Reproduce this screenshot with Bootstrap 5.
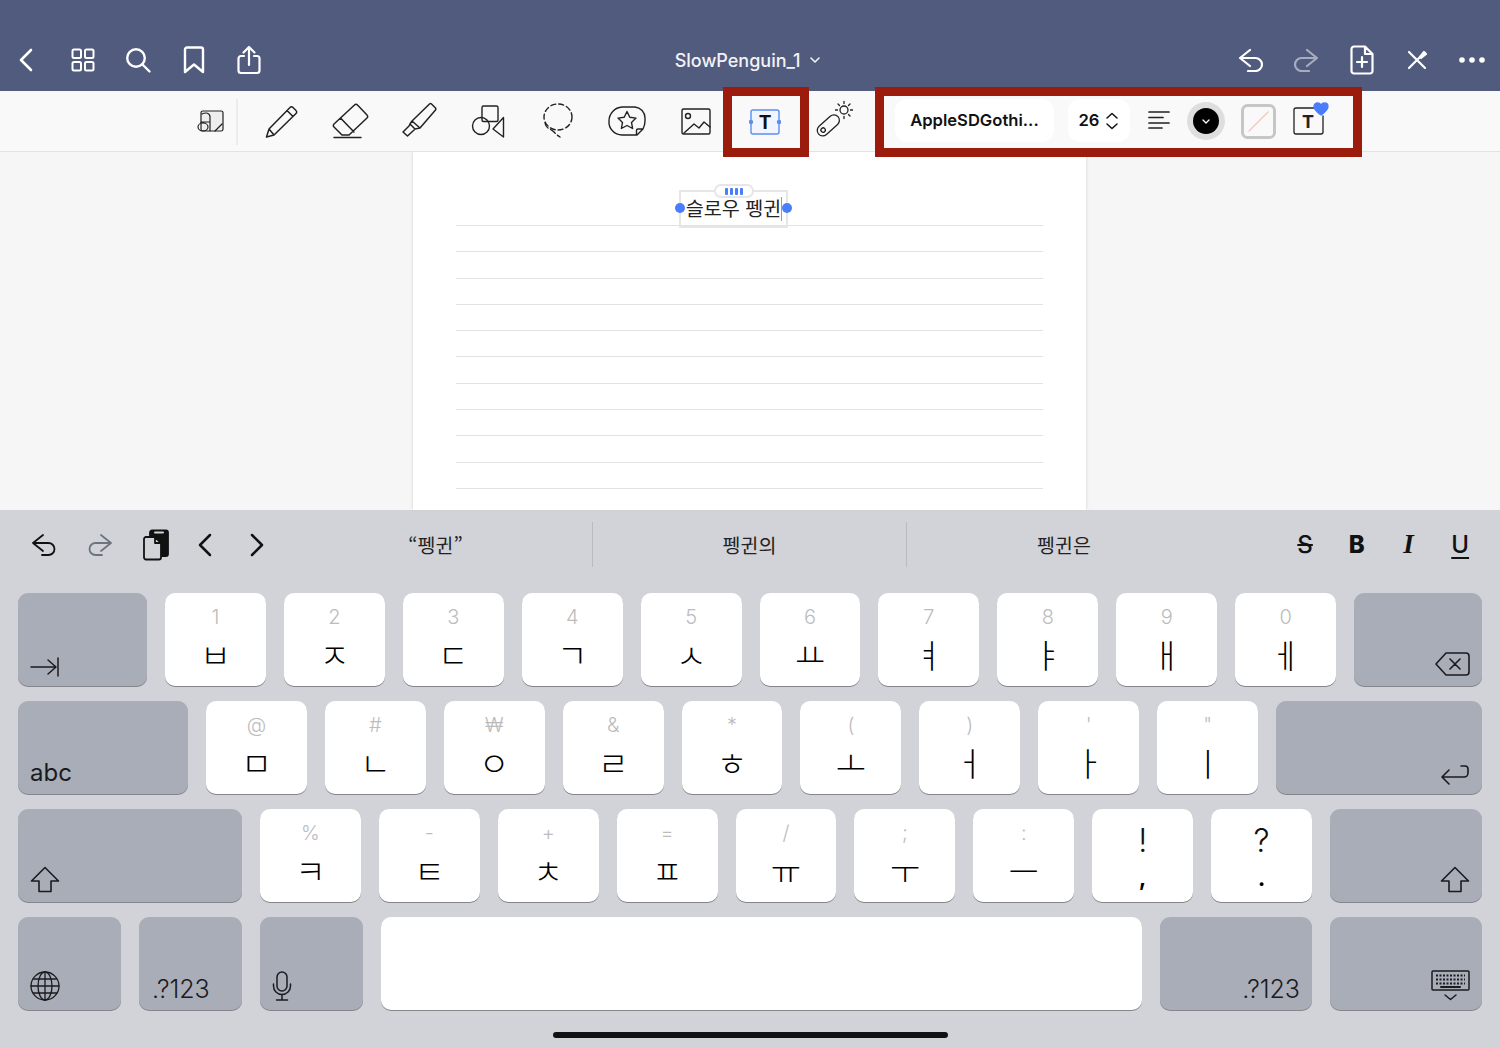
<!DOCTYPE html>
<html lang="ko">
<head>
<meta charset="utf-8">
<title>SlowPenguin_1</title>
<link href="https://cdn.jsdelivr.net/npm/bootstrap@5.3.0/dist/css/bootstrap.min.css" rel="stylesheet">
<style>
html,body{margin:0;background:#d1d3d9}
body{font-family:Inter,"Noto Sans CJK KR",sans-serif}
.screen{width:1500px;height:1048px;overflow:hidden}
svg{display:block;fill:none;stroke:currentColor;stroke-linecap:round;stroke-linejoin:round}
.topbar{height:91px;background:#515b7d;color:#fff;padding-top:29px}
.topside{flex:1 1 0}
.topcell{width:55.3px;height:60px}
.back-ic{margin-right:3px}
.doc-title{font-size:18px;font-weight:500;color:#f1f2f6;margin-right:5px;gap:10px;white-space:nowrap}
.toolbar{height:61px;background:#f9f9f9;border-bottom:1px solid #e3e3e3;padding-left:184px;color:#222;position:relative;z-index:2}
.firstcell{width:54px;height:46px;margin-top:1px;margin-right:8.4px;border-right:2px solid #ececec;padding-left:11px}
.toolcell{width:69.15px;height:60px}
.red-frame{border:9px solid #9b1c0c;height:70px;margin-top:2px;flex:none;background:#f9f9f9}
.frame-text{width:86px;margin-left:-7.5px;margin-right:-9.35px}
.frame-style{width:487px;margin-left:6.25px;padding-left:11px}
.pill{height:43px;background:#fff;border-radius:12px;font-size:16.6px;font-weight:600;color:#111;margin-top:-3px}
.pill-font{width:159px}
.pill-size{width:62px;margin-left:14px;gap:6px}
.tint{width:38px;height:38px;border-radius:50%;background:#dedede;margin-left:17px;margin-top:-2px}
.tint-in{width:26px;height:26px;border-radius:50%;background:#000;color:#fff}
.swatch{margin-left:16px;margin-top:-2px}
.align-ic{margin-left:18px;margin-top:-4px}
.txt-ic{margin-left:17px;margin-top:-6px}
.t-ic{margin-right:1px}
.canvas{height:358px;background:#f6f6f6}
.sheet{width:673px;margin-left:413px;height:358px;background:#fff;box-shadow:0 0 3px #cfcfcf;position:relative;padding:73px 43px 0}
.ruled{height:265px;background:repeating-linear-gradient(to bottom,#e2e2e2 0,#e2e2e2 1px,transparent 1px,transparent 26.3px)}
.tbox{position:absolute;left:266px;top:38px;width:109px;height:38px;border:2px solid #e6e6e6;font-size:19.6px;line-height:32px;color:#222;text-align:center;white-space:nowrap;font-family:"Noto Sans CJK KR",sans-serif}
.tbox-grip{position:absolute;left:33px;top:-8px;width:40px;height:14px;background:#fff;border:2px solid #e6e6e6;border-radius:8px;gap:2px}
.tbox-grip i{display:block;width:3px;height:7px;border-radius:1px;background:#4a7dfb}
.tbox-dot{position:absolute;top:11px;width:10px;height:10px;border-radius:50%;background:#4a7dfb}
.tbox-dot.l{left:-6px}.tbox-dot.r{right:-6px}
.tbox-caret{position:absolute;right:4px;top:5px;width:1px;height:24px;background:#7d9cf0}
.kb{height:538px;background:#d1d3d9;color:#111}
.sugbar{height:83px;padding-left:16px;padding-bottom:14px}
.sugtools{width:263px;flex:none}
.sugcell{width:56px;height:69px}
.chev1{width:32px;margin-left:5px}
.chev2{width:32px;margin-left:20px}
.sugword{width:314px;height:45px;font-size:19.5px;color:#222;border-right:1px solid #b9bbc2;font-family:"Noto Sans CJK KR",sans-serif}
.sugword.last{border-right:0}
.fmt-group{padding-right:14px}
.fmt{width:51.7px;font-size:24px;color:#111;text-align:center;line-height:1}
.fmt-s{font-weight:500;text-decoration:line-through;text-decoration-thickness:2px}
.fmt-b{font-weight:800}
.fmt-i{font-family:"Liberation Serif",serif;font-style:italic;font-weight:700;font-size:27px}
.fmt-u{font-weight:500;text-decoration:underline;text-underline-offset:4px;text-decoration-thickness:2px}
.kbrows{padding:0 18px;gap:15px}
.kbrow{height:93px;gap:18px}
.kkey{flex:1 1 0;min-width:0;background:#fff;border-radius:10px;box-shadow:0 1px 0 #85858b;padding-top:10px}
.kkey-up{font-size:20px;line-height:28px;height:28px;color:#bcbcbc;font-weight:300}
.kkey-main{font-size:33px;line-height:46px;height:46px;color:#000;font-weight:300;font-family:"Noto Sans CJK KR",sans-serif}
.kkey.punct{padding-top:18px}
.punct .kkey-up{font-size:32px;color:#111;font-weight:300}
.punct .kkey-main{font-family:Inter,sans-serif;margin-top:0;font-weight:600;font-size:24px}
.fnkey{flex:none;background:#a9adb8;border-radius:10px;box-shadow:0 1px 0 #85858b;padding:0 12px 9px;font-size:24px;line-height:24px;color:#1b1b1f}
.numkey{font-size:25px;font-weight:300;padding-left:13px}
.w129{width:129px}.w128{width:128px}.w170{width:170px}.w206{width:206px}.w224{width:224px}.w152{width:152px}.w103{width:103px}
.spacekey{flex:1 1 0;background:#fff;border-radius:10px;box-shadow:0 1px 0 #85858b}
.homebar{width:395px;height:6px;border-radius:3px;background:#111;margin:22px auto 0}
</style>
</head>
<body>
<div class="screen">

<header class="topbar d-flex align-items-center">
  <div class="topside d-flex">
    <div class="topcell d-flex align-items-center justify-content-center"><svg class="back-ic" width="16" height="24" viewBox="0 0 16 24" stroke-width="2.6"><path d="M13 2 3 12l10 10"/></svg></div>
    <div class="topcell d-flex align-items-center justify-content-center"><svg width="24" height="24" viewBox="0 0 24 24" stroke-width="2"><rect x="1.5" y="1.5" width="8.5" height="8.5" rx="1.5"/><rect x="14" y="1.5" width="8.5" height="8.5" rx="1.5"/><rect x="1.5" y="14" width="8.5" height="8.5" rx="1.5"/><rect x="14" y="14" width="8.5" height="8.5" rx="1.5"/></svg></div>
    <div class="topcell d-flex align-items-center justify-content-center"><svg width="26" height="26" viewBox="0 0 26 26" stroke-width="2.4"><circle cx="11" cy="11" r="8.8"/><path d="m17.5 17.5 7 7"/></svg></div>
    <div class="topcell d-flex align-items-center justify-content-center"><svg width="22" height="28" viewBox="0 0 22 28" stroke-width="2.4"><path d="M2 3.5A2 2 0 0 1 4 1.500h14a2 2 0 0 1 2 2V26l-9-7.500L2 26z"/></svg></div>
    <div class="topcell d-flex align-items-center justify-content-center"><svg width="24" height="30" viewBox="0 0 24 30" stroke-width="2.2"><path d="M7 11H4a2.500 2.500 0 0 0-2.500 2.500v12A2.500 2.500 0 0 0 4 28h16a2.500 2.500 0 0 0 2.500-2.500v-12A2.500 2.500 0 0 0 20 11h-3M12 20V2M6.500 7.500 12 2l5.500 5.500"/></svg></div>
  </div>
  <div class="doc-title d-flex align-items-center">SlowPenguin_1<svg width="10" height="6" viewBox="0 0 10 6" stroke-width="1.6"><path d="m1 1 4 4 4-4"/></svg></div>
  <div class="topside d-flex justify-content-end">
    <div class="topcell d-flex align-items-center justify-content-center"><svg width="26" height="24" viewBox="0 0 26 24" stroke-width="2.200"><path d="M12 2 2 10l10 8M2 10h15.500a6.500 6.500 0 0 1 0 13H10"/></svg></div>
    <div class="topcell d-flex align-items-center justify-content-center opacity-50"><svg width="26" height="24" viewBox="0 0 26 24" stroke-width="2.200"><path d="m14 2 10 8-10 8M24 10H8.500a6.500 6.500 0 0 0 0 13H16"/></svg></div>
    <div class="topcell d-flex align-items-center justify-content-center"><svg width="24" height="30" viewBox="0 0 24 30" stroke-width="2.200"><path d="M15 1.500H4A2.500 2.500 0 0 0 1.500 4v22A2.500 2.500 0 0 0 4 28.500h16a2.500 2.500 0 0 0 2.500-2.500V9zM15 1.500V9h7.500M12 12v10M7 17h10"/></svg></div>
    <div class="topcell d-flex align-items-center justify-content-center"><svg width="22" height="22" viewBox="0 0 22 22" stroke-width="2.200"><path d="M3 3l16 16M3 19 14 8"/><path d="m14 8 4-5 2 2-5 4z" fill="currentColor"/></svg></div>
    <div class="topcell d-flex align-items-center justify-content-center"><svg width="26" height="6" viewBox="0 0 26 6" stroke-width="0"><g fill="#fff"><circle cx="3" cy="3" r="2.800"/><circle cx="13" cy="3" r="2.800"/><circle cx="23" cy="3" r="2.800"/></g></svg></div>
  </div>
</header>

<nav class="toolbar d-flex align-items-center">
  <div class="firstcell d-flex align-items-center flex-none">
    <svg width="32" height="26" viewBox="0 0 32 26" stroke-width="1.200"><rect x="6" y="2" width="22" height="20" rx="1.800" fill="#eeeeee"/><path d="M20 22l7-7"/><path d="M3 18a5 4 0 1 1 10 0 5 4 0 1 1-10 0zM7 5c4-2 8-1 8 3v14M6 13h9"/></svg>
  </div>
  <div class="toolcell d-flex align-items-center justify-content-center"><svg width="44" height="44" viewBox="0 0 44 44" stroke-width="1.500"><path d="M7.500 38 10 30 31 8.500a2 2 0 0 1 3 0l3 3a2 2 0 0 1 0 3L15 36zM10 30l5 6M28 11.500l6 6"/></svg></div>
  <div class="toolcell d-flex align-items-center justify-content-center"><svg width="44" height="44" viewBox="0 0 44 44" stroke-width="1.500"><path d="M26.500 6a2 2 0 0 1 3 0l9.500 10a2 2 0 0 1 0 3L21 36h-7l-8-8a2 2 0 0 1 0-3zM12.500 19l13.500 14M6 38.500h27"/></svg></div>
  <div class="toolcell d-flex align-items-center justify-content-center"><svg width="44" height="44" viewBox="0 0 44 44" stroke-width="1.500"><path d="M32.500 5a1.500 1.500 0 0 1 2 0l4 4a1.500 1.500 0 0 1 0 2L23 29l-8-7zM15 22l-2 3 5 5 5-1M13 25l-1 2-6 6 4.500 4 6-5.500 1.500-1.500"/></svg></div>
  <div class="toolcell d-flex align-items-center justify-content-center"><svg width="44" height="44" viewBox="0 0 44 44" stroke-width="1.400"><rect x="16" y="7" width="16" height="15.500" rx="1.500"/><circle cx="15" cy="27" r="8.500"/><path d="m27 30 10.500-11.500v19.500z"/></svg></div>
  <div class="toolcell d-flex align-items-center justify-content-center"><svg width="44" height="44" viewBox="0 0 44 44" stroke-width="1.400"><ellipse cx="22" cy="18" rx="14" ry="13" stroke-dasharray="5 3"/><path d="M9 24c1 6 5 5 9 9 1.500 1.500 3 3 6 5" stroke-dasharray="6 3"/></svg></div>
  <div class="toolcell d-flex align-items-center justify-content-center"><svg width="44" height="44" viewBox="0 0 44 44" stroke-width="1.400"><path d="M17 8h13a11 11 0 0 1 10 11v3c0 4-1 6-2 8l-6 6H17A13 13 0 0 1 4 22A14 14 0 0 1 17 8zM38 30h-5a1.500 1.500 0 0 0-1.500 1.500V36"/><path d="m22 12.500 2.800 5.700 6.200.9-4.500 4.300 1.100 6.100-5.600-3-5.600 3 1.100-6.100L13 19.100l6.200-.9z"/></svg></div>
  <div class="toolcell d-flex align-items-center justify-content-center"><svg width="44" height="44" viewBox="0 0 44 44" stroke-width="1.400"><rect x="8" y="10" width="28" height="25" rx="1.500"/><circle cx="14" cy="17" r="2.500"/><path d="m10 34 10-9 5 4 5-6 6 5"/></svg></div>
  <div class="red-frame frame-text d-flex align-items-center justify-content-center">
    <svg class="t-ic" width="32" height="28" viewBox="0 0 32 28" stroke-width="1.400" style="stroke:#5b8ff0"><rect x="2" y="2" width="28" height="24" rx="2" fill="#f0f5ff"/><circle cx="2" cy="14" r="1.500" fill="#5b8ff0"/><circle cx="30" cy="14" r="1.500" fill="#5b8ff0"/><text x="16" y="21" text-anchor="middle" font-size="19" font-weight="700" fill="#111" style="stroke:none" font-family="Inter">T</text></svg>
  </div>
  <div class="toolcell d-flex align-items-center justify-content-center"><svg width="44" height="44" viewBox="0 0 44 44" stroke-width="1.300"><g transform="rotate(-42 16 26)"><rect x="3" y="21" width="26" height="11" rx="5.500"/><circle cx="9" cy="26.500" r="2.200"/></g><circle cx="32" cy="11" r="4"/><path d="M32 2.500v2M32 17.500v2M23.500 11h2M38.500 11h2M26 5l1.500 1.500M36.500 15.500 38 17M38 5l-1.500 1.500"/></svg></div>
  <div class="red-frame frame-style d-flex align-items-center">
    <div class="pill pill-font d-flex align-items-center justify-content-center">AppleSDGothi...</div>
    <div class="pill pill-size d-flex align-items-center justify-content-center">26<svg width="14" height="18" viewBox="0 0 14 18" stroke-width="1.500"><path d="m2 6 5-4.500L12 6M2 12l5 4.500 5-4.500"/></svg></div>
    <svg class="align-ic" width="22" height="18" viewBox="0 0 22 18" stroke-width="1.700"><path d="M1 1h20M1 6.500h14M1 12h20M1 17h13"/></svg>
    <div class="tint d-flex align-items-center justify-content-center"><div class="tint-in d-flex align-items-center justify-content-center"><svg width="8" height="5" viewBox="0 0 8 5" stroke-width="1.300"><path d="m1 1 3 3 3-3"/></svg></div></div>
    <svg class="swatch" width="35" height="35" viewBox="0 0 35 35"><rect x="1.500" y="1.500" width="32" height="32" rx="5" fill="#f9f9f9" stroke-width="3" style="stroke:#c6c6c6"/><path d="M8 27 27 8" stroke-width="1.500" style="stroke:#f3c9c3"/></svg>
    <svg class="txt-ic" width="36" height="34" viewBox="0 0 36 34" stroke-width="1.300"><path d="M21 6H3a2 2 0 0 0-2 2v22a2 2 0 0 0 2 2h25a2 2 0 0 0 2-2V14"/><text x="15" y="26" text-anchor="middle" font-size="18" font-weight="700" fill="#222" style="stroke:none" font-family="Inter">T</text><path d="M28 13c-4-3-7-5-7-8.500C21 2 23 1 24.500 1c1.500 0 3 1 3.500 2 .5-1 2-2 3.500-2C33 1 35 2 35 4.500 35 8 32 10 28 13z" fill="#4a7dfb" style="stroke:#4a7dfb"/></svg>
  </div>
</nav>

<main class="canvas">
  <div class="sheet">
    <div class="ruled"></div>
    <div class="tbox">슬로우 펭귄
      <div class="tbox-grip d-flex align-items-center justify-content-center"><i></i><i></i><i></i><i></i></div>
      <span class="tbox-dot l"></span><span class="tbox-dot r"></span><span class="tbox-caret"></span>
    </div>
  </div>
</main>

<section class="kb d-flex flex-column">
  <div class="sugbar d-flex align-items-center">
    <div class="sugtools d-flex align-items-center">
      <div class="sugcell d-flex align-items-center justify-content-center"><svg width="26" height="24" viewBox="0 0 26 24" stroke-width="1.800"><path d="M12 2 2 10l10 8M2 10h15.500a6 6 0 0 1 0 12H11"/></svg></div>
      <div class="sugcell d-flex align-items-center justify-content-center text-secondary"><svg width="26" height="24" viewBox="0 0 26 24" stroke-width="1.800"><path d="m14 2 10 8-10 8M24 10H8.500a6 6 0 0 0 0 12H15"/></svg></div>
      <div class="sugcell d-flex align-items-center justify-content-center"><svg width="26" height="32" viewBox="0 0 26 32" stroke-width="1.800"><path d="M7 3.500A2 2 0 0 1 9 1.500h14a2 2 0 0 1 2 2V25a2 2 0 0 1-2 2h-4V14l-6-6H7z" fill="#111"/><path d="M12 3.500h8" stroke-width="2" style="stroke:#d1d3d9"/><path d="M3 8h9l6 6v14.500a2 2 0 0 1-2 2H3a2 2 0 0 1-2-2V10a2 2 0 0 1 2-2zM12 8v6h6" fill="#d1d3d9"/></svg></div>
      <div class="chev1 d-flex justify-content-center"><svg width="16" height="24" viewBox="0 0 16 24" stroke-width="2.500"><path d="M13 2 3 12l10 10"/></svg></div>
      <div class="chev2 d-flex justify-content-center"><svg width="16" height="24" viewBox="0 0 16 24" stroke-width="2.500"><path d="m3 2 10 10L3 22"/></svg></div>
    </div>
    <div class="sugword d-flex align-items-center justify-content-center">“펭귄”</div>
    <div class="sugword d-flex align-items-center justify-content-center">펭귄의</div>
    <div class="sugword last d-flex align-items-center justify-content-center">펭귄은</div>
    <div class="fmt-group ms-auto d-flex align-items-center">
      <div class="fmt fmt-s">S</div><div class="fmt fmt-b">B</div><div class="fmt fmt-i">I</div><div class="fmt fmt-u">U</div>
    </div>
  </div>

  <div class="kbrows d-flex flex-column">
    <div class="kbrow d-flex">
      <div class="fnkey w129 d-flex align-items-end"><svg width="29" height="20" viewBox="0 0 29 20" stroke-width="1.500"><path d="M1 10h25M18 3l8 7-8 7M28 1v18"/></svg></div>
      <div class="kkey d-flex flex-column align-items-center"><div class="kkey-up">1</div><div class="kkey-main">ㅂ</div></div>
      <div class="kkey d-flex flex-column align-items-center"><div class="kkey-up">2</div><div class="kkey-main">ㅈ</div></div>
      <div class="kkey d-flex flex-column align-items-center"><div class="kkey-up">3</div><div class="kkey-main">ㄷ</div></div>
      <div class="kkey d-flex flex-column align-items-center"><div class="kkey-up">4</div><div class="kkey-main">ㄱ</div></div>
      <div class="kkey d-flex flex-column align-items-center"><div class="kkey-up">5</div><div class="kkey-main">ㅅ</div></div>
      <div class="kkey d-flex flex-column align-items-center"><div class="kkey-up">6</div><div class="kkey-main">ㅛ</div></div>
      <div class="kkey d-flex flex-column align-items-center"><div class="kkey-up">7</div><div class="kkey-main">ㅕ</div></div>
      <div class="kkey d-flex flex-column align-items-center"><div class="kkey-up">8</div><div class="kkey-main">ㅑ</div></div>
      <div class="kkey d-flex flex-column align-items-center"><div class="kkey-up">9</div><div class="kkey-main">ㅐ</div></div>
      <div class="kkey d-flex flex-column align-items-center"><div class="kkey-up">0</div><div class="kkey-main">ㅔ</div></div>
      <div class="fnkey w128 d-flex align-items-end justify-content-end"><svg width="35" height="26" viewBox="0 0 35 26" stroke-width="1.600"><path d="M11 2h20a3 3 0 0 1 3 3v16a3 3 0 0 1-3 3H11L1 13zM15 8l10 10M25 8 15 18"/></svg></div>
    </div>
    <div class="kbrow d-flex">
      <div class="fnkey w170 d-flex align-items-end">abc</div>
      <div class="kkey d-flex flex-column align-items-center"><div class="kkey-up">@</div><div class="kkey-main">ㅁ</div></div>
      <div class="kkey d-flex flex-column align-items-center"><div class="kkey-up">#</div><div class="kkey-main">ㄴ</div></div>
      <div class="kkey d-flex flex-column align-items-center"><div class="kkey-up">₩</div><div class="kkey-main">ㅇ</div></div>
      <div class="kkey d-flex flex-column align-items-center"><div class="kkey-up">&amp;</div><div class="kkey-main">ㄹ</div></div>
      <div class="kkey d-flex flex-column align-items-center"><div class="kkey-up">*</div><div class="kkey-main">ㅎ</div></div>
      <div class="kkey d-flex flex-column align-items-center"><div class="kkey-up">(</div><div class="kkey-main">ㅗ</div></div>
      <div class="kkey d-flex flex-column align-items-center"><div class="kkey-up">)</div><div class="kkey-main">ㅓ</div></div>
      <div class="kkey d-flex flex-column align-items-center"><div class="kkey-up">'</div><div class="kkey-main">ㅏ</div></div>
      <div class="kkey d-flex flex-column align-items-center"><div class="kkey-up">"</div><div class="kkey-main">ㅣ</div></div>
      <div class="fnkey w206 d-flex align-items-end justify-content-end"><svg width="30" height="23" viewBox="0 0 30 23" stroke-width="1.600"><path d="M9 8 2 15l7 7M2 15h22a4 4 0 0 0 4-4V7a3 3 0 0 0-3-3h-4"/></svg></div>
    </div>
    <div class="kbrow d-flex">
      <div class="fnkey w224 d-flex align-items-end"><svg width="30" height="27" viewBox="0 0 30 27" stroke-width="1.600"><path d="M15 1.500 1.500 15H9v10.500h12V15h7.500z"/></svg></div>
      <div class="kkey d-flex flex-column align-items-center"><div class="kkey-up">%</div><div class="kkey-main">ㅋ</div></div>
      <div class="kkey d-flex flex-column align-items-center"><div class="kkey-up">-</div><div class="kkey-main">ㅌ</div></div>
      <div class="kkey d-flex flex-column align-items-center"><div class="kkey-up">+</div><div class="kkey-main">ㅊ</div></div>
      <div class="kkey d-flex flex-column align-items-center"><div class="kkey-up">=</div><div class="kkey-main">ㅍ</div></div>
      <div class="kkey d-flex flex-column align-items-center"><div class="kkey-up">/</div><div class="kkey-main">ㅠ</div></div>
      <div class="kkey d-flex flex-column align-items-center"><div class="kkey-up">;</div><div class="kkey-main">ㅜ</div></div>
      <div class="kkey d-flex flex-column align-items-center"><div class="kkey-up">:</div><div class="kkey-main">ㅡ</div></div>
      <div class="kkey punct d-flex flex-column align-items-center"><div class="kkey-up">!</div><div class="kkey-main">,</div></div>
      <div class="kkey punct d-flex flex-column align-items-center"><div class="kkey-up">?</div><div class="kkey-main">.</div></div>
      <div class="fnkey w152 d-flex align-items-end justify-content-end"><svg width="30" height="27" viewBox="0 0 30 27" stroke-width="1.600"><path d="M15 1.500 1.500 15H9v10.500h12V15h7.500z"/></svg></div>
    </div>
    <div class="kbrow d-flex">
      <div class="fnkey w103 d-flex align-items-end"><svg width="30" height="30" viewBox="0 0 30 30" stroke-width="1.300"><circle cx="15" cy="15" r="14"/><ellipse cx="15" cy="15" rx="7" ry="14"/><path d="M15 1v28M1 15h28M3.500 8h23M3.500 22h23"/></svg></div>
      <div class="fnkey numkey w103 d-flex align-items-end">.?123</div>
      <div class="fnkey w103 d-flex align-items-end"><svg width="20" height="30" viewBox="0 0 20 30" stroke-width="1.500"><rect x="5" y="1" width="10" height="19" rx="5"/><path d="M1.500 13v2a8.500 8.500 0 0 0 17 0v-2M10 23.500V29M4.500 29h11"/></svg></div>
      <div class="spacekey"></div>
      <div class="fnkey numkey w152 d-flex align-items-end justify-content-end">.?123</div>
      <div class="fnkey w152 d-flex align-items-end justify-content-end"><svg width="39" height="31" viewBox="0 0 39 31" stroke-width="1.500"><rect x="1" y="1" width="37" height="19" rx="1"/><path d="M5 5.500h29M5 9.500h29M5 13.500h29" stroke-dasharray="2 1.500" stroke-linecap="butt" stroke-width="2"/><path d="M10 17h19" stroke-width="2"/><path d="m14 25 5.500 4.500L25 25"/></svg></div>
    </div>
  </div>
  <div class="homebar"></div>
</section>
</div>
<script src="https://cdn.jsdelivr.net/npm/bootstrap@5.3.0/dist/js/bootstrap.bundle.min.js"></script>
</body>
</html>
